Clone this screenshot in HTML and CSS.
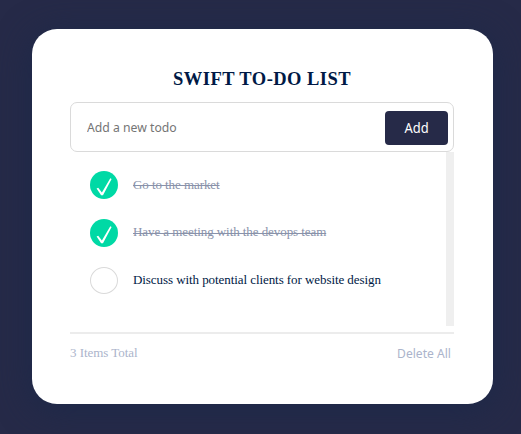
FILE: index.html
```html
<!DOCTYPE html>
<html lang="en">
<head>
<meta charset="utf-8">
<title>Swift To-Do List</title>
<link rel="stylesheet" href="styles.css">
</head>
<body>
<main class="card">
  <h1 class="title">SWIFT TO-DO LIST</h1>
  <form class="entry">
    <input class="field" type="text" placeholder="Add a new todo" aria-label="Add a new todo">
    <button class="add" type="button"><span>Add</span></button>
  </form>
  <div class="list">
    <ul class="items">
      <li class="item done"><span class="check"><svg viewBox="0 0 28 28"><path d="M6.6 17.6 8.2 16.7 11.9 21.6 20.3 7.3 21.6 8 13 24.2 11.1 24.2Z"/></svg></span><span class="label">Go to the market</span></li>
      <li class="item done"><span class="check"><svg viewBox="0 0 28 28"><path d="M6.6 17.6 8.2 16.7 11.9 21.6 20.3 7.3 21.6 8 13 24.2 11.1 24.2Z"/></svg></span><span class="label raised">Have a meeting with the devops team</span></li>
      <li class="item"><span class="check"></span><span class="label raised">Discuss with potential clients for website design</span></li>
    </ul>
    <div class="track"></div>
  </div>
  <footer class="footer">
    <span class="total">3 Items Total</span>
    <button class="delete" type="button"><span>Delete All</span></button>
  </footer>
</main>
</body>
</html>
```

FILE: styles.css
```css
* { box-sizing: border-box; }
body {
  margin: 0;
  height: 434px;
  padding: 29px 28px 30px 32px;
  overflow: hidden;
  background: #262a48;
  font-family: "Liberation Serif", serif;
  color: #001945;
}
.card {
  height: 375px;
  padding: 40px 39px 0 38px;
  border-radius: 25px;
  background: #fff;
  box-shadow: 0 5px 35px #1c2949;
}
.title {
  margin: 0;
  height: 33px;
  line-height: 21px;
  font-size: 18.5px;
  letter-spacing: 0.45px;
  text-align: center;
  white-space: nowrap;
}
.entry {
  display: flex;
  align-items: center;
  height: 50px;
  padding: 1px 5px 0 16px;
  border: 1px solid #dadada;
  border-radius: 7px;
}
.field {
  flex: 1;
  min-width: 0;
  padding: 0 0 2px;
  border: 0;
  outline: 0;
  background: none;
  font: 13px "Noto Sans", sans-serif;
  transform: scaleX(0.94);
  transform-origin: left;
}
.field::placeholder { color: #757575; }
.add {
  width: 63px;
  height: 34px;
  padding: 0 0 2px;
  border: 0;
  border-radius: 4px;
  background: #262a48;
  color: #fff;
  font: 14.5px "Noto Sans", sans-serif;
}
.add span { display: inline-block; transform: scaleX(0.89); }
.list {
  display: flex;
  height: 174px;
}
.items {
  flex: 1;
  margin: 0;
  padding: 9px 0 0 20px;
  list-style: none;
}
.item {
  display: flex;
  align-items: center;
  gap: 15px;
  height: 48px;
  font-size: 13px;
  letter-spacing: -0.07px;
  white-space: nowrap;
}
.check {
  width: 28px;
  height: 27px;
  margin-bottom: 1px;
  border: 1px solid #dadada;
  border-radius: 50%;
}
.done .check { height: 28px; margin: 0; border: 0; background: #00d9a5; }
.check svg { display: block; width: 28px; height: 28px; fill: #fff; }
.raised { margin-bottom: 2px; }
.done .label {
  color: #8992aa;
  text-decoration: underline 1px;
  text-decoration-skip-ink: none;
  text-underline-offset: -4px;
}
.done .raised { text-underline-offset: -3px; }
.track { width: 8px; background: #efefef; }
.footer {
  display: flex;
  justify-content: space-between;
  align-items: flex-start;
  margin-top: 6px;
  border-top: 2px solid #ececec;
  color: #abb4cb;
}
.total { padding-top: 11px; font-size: 13px; line-height: 15px; letter-spacing: -0.05px; }
.delete {
  margin-top: 11px;
  padding: 0 3px 0 0;
  border: 0;
  background: none;
  color: inherit;
  font: 13px/17px "Noto Sans", sans-serif;
}
.delete span { display: inline-block; transform: scaleX(0.93); transform-origin: right; }
```
